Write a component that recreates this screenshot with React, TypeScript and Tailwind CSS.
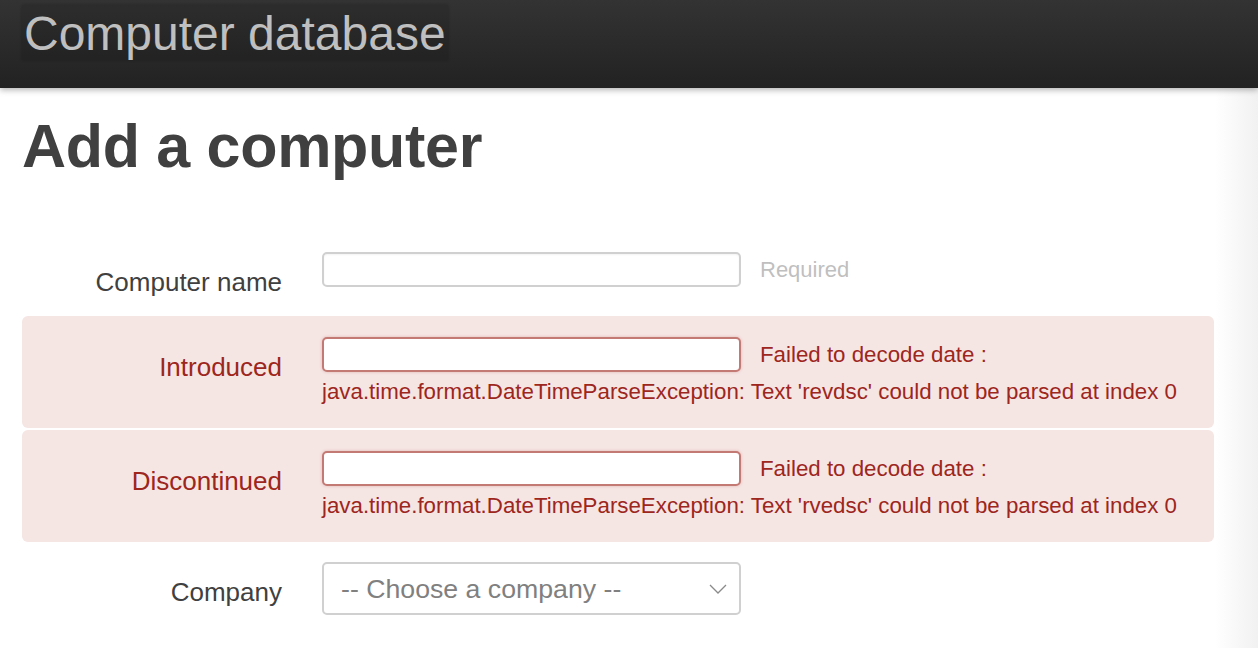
const font = { fontFamily: '"Liberation Sans", Arial, Helvetica, sans-serif' };

type ErrorRowProps = {
  label: string;
  value: string;
};

const ErrorRow = ({ label, value }: ErrorRowProps) => (
  <div className="flex items-start rounded-[6px] bg-[#f5e5e3] pt-[21px] pb-[23px]">
    <label className="w-[260px] shrink-0 pt-[15px] text-right text-[26px] leading-[30px] text-[#9d261d]">
      {label}
    </label>
    <div className="ml-[40px]">
      <div className="flex items-center">
        <input
          type="text"
          className="h-[35px] w-[419px] rounded-[5px] border-2 border-[#c47a74] bg-white shadow-[0_0_3px_rgba(171,41,32,0.25)] outline-none"
        />
        <span className="ml-[19px] text-[22.3px] leading-[26px] text-[#9d261d]">
          Failed to decode date :
        </span>
      </div>
      <div className="mt-[7px] whitespace-nowrap text-[22.3px] leading-[26px] text-[#9d261d]">
        java.time.format.DateTimeParseException: Text '{value}' could not be parsed at index 0
      </div>
    </div>
  </div>
);

export default function App() {
  return (
    <div
      style={font}
      className="min-h-[648px] w-full overflow-hidden bg-[linear-gradient(to_right,#ffffff_1215px,#f1f1f1)]"
    >
      <header className="h-[88px] w-full bg-[linear-gradient(to_bottom,#333333,#222222)] pt-[5px] pl-[22px] shadow-[0_2px_6px_rgba(0,0,0,0.3)]">
        <a className="inline-block h-[55px] bg-black/10 px-[2px] pt-[3px] text-[48px] leading-[52px] text-[#bfbfbf] shadow-[0_0_3px_rgba(0,0,0,0.25)]">
          Computer database
        </a>
      </header>

      <main className="px-[22px]">
        <h1 className="mt-[25px] text-[61px] font-bold leading-[67px] tracking-[-0.3px] text-[#404040]">
          Add a computer
        </h1>

        <form className="mt-[51px] w-[1192px]">
          <div className="flex items-start pt-[21px] pb-[19px]">
            <label className="w-[260px] shrink-0 pt-[15px] text-right text-[26px] leading-[30px] text-[#404040]">
              Computer name
            </label>
            <div className="ml-[40px] flex items-center">
              <input
                type="text"
                className="h-[35px] w-[419px] rounded-[5px] border-2 border-[#d0d0d0] bg-white shadow-[inset_0_1px_2px_rgba(0,0,0,0.05)] outline-none"
              />
              <span className="ml-[19px] text-[22px] leading-[26px] text-[#bfbfbf]">Required</span>
            </div>
          </div>

          <ErrorRow label="Introduced" value="revdsc" />
          <div className="h-[2px]" />
          <ErrorRow label="Discontinued" value="rvedsc" />

          <div className="flex items-start pt-[20px]">
            <label className="w-[260px] shrink-0 pt-[15px] text-right text-[26px] leading-[30px] text-[#404040]">
              Company
            </label>
            <div className="ml-[40px] flex h-[53px] w-[419px] items-center justify-between rounded-[5px] border-2 border-[#d0d0d0] bg-white pl-[17px] pr-[12px]">
              <span className="text-[26.7px] leading-[30px] text-[#808080]">-- Choose a company --</span>
              <svg width="18" height="10" viewBox="0 0 18 10" fill="none">
                <path d="M1 1l8 8 8-8" stroke="#8a8a8a" strokeWidth="1.3" />
              </svg>
            </div>
          </div>
        </form>
      </main>
    </div>
  );
}
